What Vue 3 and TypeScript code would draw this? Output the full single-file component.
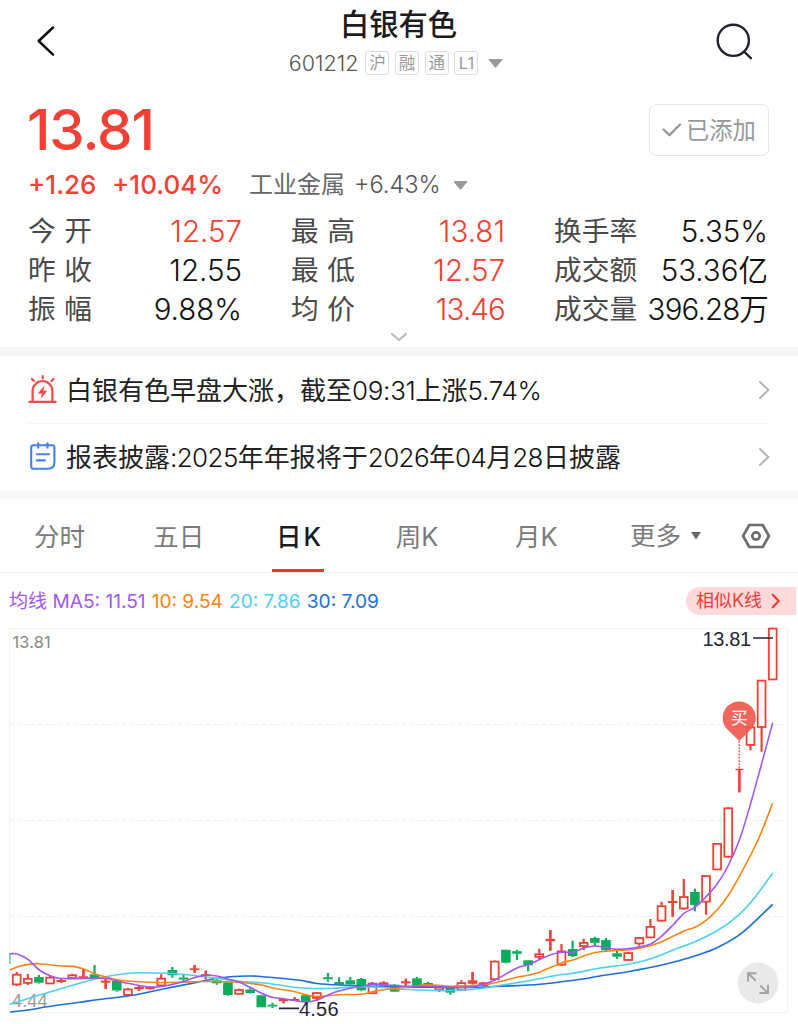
<script setup lang="ts">
interface Quote {
  label: string
  value: string
  tone: 'up' | 'plain'
  tight?: boolean
}

type Kind = 'h' | 'r' | 'g'
// body top, body bottom, high, low, kind (h: hollow, r: thin red, g: green)
type Candle = [number, number, number, number, Kind]

const badges: string[] = ['沪', '融', '通', 'L1']

const columns: Quote[][] = [
  [
    { label: '今 开', value: '12.57', tone: 'up' },
    { label: '昨 收', value: '12.55', tone: 'plain' },
    { label: '振 幅', value: '9.88%', tone: 'plain' },
  ],
  [
    { label: '最 高', value: '13.81', tone: 'up' },
    { label: '最 低', value: '12.57', tone: 'up' },
    { label: '均 价', value: '13.46', tone: 'up', tight: true },
  ],
  [
    { label: '换手率', value: '5.35%', tone: 'plain' },
    { label: '成交额', value: '53.36亿', tone: 'plain' },
    { label: '成交量', value: '396.28万', tone: 'plain', tight: true },
  ],
]

const tabs: string[] = ['分时', '五日', '日K', '周K', '月K']
const activeTab = '日K'

// Headlines split so that runs of digits can be set tighter than the Chinese text.
const splitDigits = (s: string): string[] => s.split(/([0-9:.%]+)/).filter(Boolean)
const isDigits = (s: string): boolean => /^[0-9:.%]/.test(s)
const headlineOne = splitDigits('白银有色早盘大涨，截至09:31上涨5.74%')
const headlineTwo = splitDigits('报表披露:2025年年报将于2026年04月28日披露')

const candles: Candle[] = [
  [974.3, 984, 972, 986, 'h'], [978.5, 982.5, 974, 985, 'h'], [977, 982.7, 975, 983.5, 'g'],
  [977.3, 983, 975, 983, 'h'], [980, 982, 978.5, 983, 'r'], [974.9, 977.6, 973.7, 978, 'h'],
  [976.3, 978, 969, 978, 'r'], [974.3, 978.3, 965, 978.3, 'g'], [980.6, 982.6, 979, 989, 'r'],
  [981, 990.5, 979.5, 991.7, 'g'], [989, 994.5, 988, 995, 'h'], [987, 989.2, 985.7, 991, 'r'],
  [987, 989.2, 986.5, 989.5, 'r'], [978.3, 985, 974.3, 986, 'h'], [970, 975.3, 967, 977.7, 'g'],
  [977.5, 979.5, 975, 981.7, 'g'], [968.3, 970.1, 965, 972.7, 'r'], [974.1, 976, 970.7, 979.3, 'r'],
  [980.3, 983.3, 979.3, 984.7, 'g'], [982.3, 995, 982, 995.7, 'g'], [989.6, 993.4, 988.5, 994.5, 'h'],
  [989.5, 993, 987.7, 993.4, 'g'], [995.3, 1007.3, 995, 1007.3, 'g'], [1004.7, 1006.5, 1002.7, 1008, 'g'],
  [999, 1001.2, 998, 1003.3, 'r'], [999, 1001, 997.3, 1001, 'r'], [995.2, 1001.3, 994, 1002, 'g'],
  [992.7, 997.5, 992, 1001, 'h'], [977.2, 979.2, 973, 981.7, 'g'], [982, 984.7, 977.3, 984.7, 'g'],
  [980.3, 984.3, 977, 984.7, 'g'], [979, 990.3, 978, 991.3, 'g'], [983.2, 992.8, 982, 993, 'h'],
  [982.3, 985.7, 981.5, 986.3, 'r'], [984.7, 991.7, 984, 992, 'g'], [981.3, 983.3, 978.7, 985.7, 'r'],
  [978.3, 987.3, 977, 988, 'g'], [983, 985.7, 981.7, 987, 'g'], [987.2, 989.6, 986, 992, 'h'],
  [987.3, 992.7, 986, 994.7, 'g'], [982.7, 989.6, 980.3, 990, 'h'], [980.3, 983.8, 972, 984.3, 'r'],
  [982.4, 986, 982, 986.5, 'r'], [961.2, 978.8, 960.5, 980, 'h'], [949.8, 962.7, 949.5, 963.5, 'g'],
  [951.2, 953.8, 949.7, 960, 'g'], [960.3, 965.3, 960, 971.3, 'g'], [953.8, 956.4, 948.7, 960, 'h'],
  [938.8, 941.2, 930, 950.7, 'r'], [951, 964.3, 944, 965.4, 'h'], [949, 956, 940.7, 957, 'g'],
  [942.5, 945.6, 938.7, 950, 'h'], [938, 942.9, 936.7, 946, 'g'], [940, 950.3, 938, 951, 'g'],
  [953.3, 956.7, 950.3, 958.7, 'g'], [952.7, 959.6, 952, 960, 'h'], [937.6, 943, 937, 945.7, 'h'],
  [926.5, 937, 919, 937.6, 'h'], [905.8, 920.2, 901.7, 921.7, 'h'], [901, 903, 890, 916.7, 'r'],
  [896.6, 908, 879, 909.7, 'h'], [892, 905, 888.7, 911.3, 'g'], [875.6, 901.2, 875, 914.7, 'h'],
  [843.5, 869, 843, 869.5, 'h'], [807.9, 856.3, 807.3, 857.8, 'h'], [768.8, 770.3, 769, 792.3, 'r'],
  [727, 744.5, 726.5, 750.3, 'h'], [680.2, 726.6, 680, 751.7, 'h'], [628.2, 679, 627.8, 679.5, 'h'],
]

const candleX = (i: number): number => 16.7 + i * 11.118

// Smooth curve through the points: Catmull-Rom tangents as cubic segments.
function curve(points: number[][]): string {
  let d = `M${points[0][0]} ${points[0][1]}`
  for (let i = 0; i < points.length - 1; i++) {
    const a = points[Math.max(i - 1, 0)]
    const b = points[i]
    const c = points[i + 1]
    const e = points[Math.min(i + 2, points.length - 1)]
    const k = (c[0] - b[0]) / 3
    const m1 = (c[1] - a[1]) / (c[0] - a[0])
    const m2 = (e[1] - b[1]) / (e[0] - b[0])
    d += `C${(b[0] + k).toFixed(1)} ${(b[1] + m1 * k).toFixed(1)} ${(c[0] - k).toFixed(1)} ${(c[1] - m2 * k).toFixed(1)} ${c[0]} ${c[1]}`
  }
  return d
}

const averages: { name: string; color: string; d: string }[] = [
  {
    name: 'ma30', color: '#1a6fdc',
    d: curve([[10, 1012], [30, 1009.7], [47, 1006.7], [80, 1002.3], [97, 999.7], [133, 995.3], [163, 989], [200, 981.7], [213, 979], [230, 976.7], [252, 976], [267, 977], [300, 980.3], [317, 983.5], [347, 985.3], [373, 986.3], [400, 987], [433, 987.2], [467, 987.5], [500, 986.3], [540, 984.3], [567, 981], [583, 979], [600, 976], [628, 971.7], [665, 964.3], [698, 955], [718, 947.3], [741, 933.7], [772.7, 904.3]]),
  },
  {
    name: 'ma20', color: '#4dd0f5',
    d: curve([[10, 1004.3], [33, 997], [60, 989], [83, 982.3], [103, 977.3], [123, 974], [137, 972.8], [167, 973.3], [187, 974.7], [200, 976.3], [220, 978.7], [240, 981.3], [267, 983.3], [290, 986.7], [313, 988.5], [333, 988.3], [353, 986.9], [380, 987.3], [400, 989], [433, 990.5], [460, 990.3], [483, 988.3], [507, 984.3], [533, 980], [557, 975.3], [573, 973.3], [600, 968], [628, 964.3], [651, 958.7], [675, 949.3], [695, 941.7], [718, 930.3], [738, 915.7], [755, 897.3], [772.7, 873]]),
  },
  {
    name: 'ma10', color: '#ff8310',
    d: curve([[10, 970], [17, 967], [28, 964.4], [39, 963.7], [61.7, 966], [73, 966.4], [83.5, 969], [95, 974], [107, 977.3], [118, 980], [150, 982.3], [180, 982.3], [200, 981.5], [228, 981.7], [240, 982.3], [262, 985], [272, 987.7], [295, 991.7], [306, 994.7], [317, 996.3], [340, 994.7], [363, 994], [377, 990.7], [400, 988], [410, 986.7], [428, 984.9], [450, 986.3], [467, 985.7], [483, 984.7], [495, 982.7], [517, 977.3], [528, 975.3], [540, 972], [562, 962.7], [573, 960], [583, 956.3], [595, 952.5], [618, 950.3], [631, 949.7], [650, 945.7], [661, 942], [684, 931], [695, 927.3], [706, 920.3], [717, 910], [728, 895.7], [741, 873.3], [758, 840], [772.7, 803.3]]),
  },
  {
    name: 'ma5', color: '#a257f0',
    d: curve([[10, 953.7], [17.3, 953.9], [28.3, 959.7], [39.3, 970], [50, 975.7], [61, 978.5], [97, 978.1], [107, 978.5], [117, 981], [128, 983.3], [150, 987], [163, 986.3], [182, 982], [195, 977.5], [206.7, 975.3], [217, 976], [228, 979], [239.5, 982.3], [250, 987.3], [261.6, 993.3], [272, 997.3], [283, 998.7], [306, 1002.1], [317, 1000], [328, 995], [338, 991.3], [348, 988.7], [363, 985.7], [372.7, 984.2], [383, 984.7], [400, 986], [428, 986.3], [467, 987.3], [483, 984.3], [495, 980], [517, 968], [528, 964.7], [550, 955], [562, 952.2], [573, 952.3], [583, 948.3], [595, 946], [604, 947.3], [615, 949.2], [631, 948.3], [650, 944.3], [661, 936.7], [673, 925], [684, 913.3], [695, 907.3], [706, 896.7], [717, 884.3], [728, 866], [739.7, 839.3], [749.7, 806.7], [761.3, 765], [772.7, 722.7]]),
  },
]
</script>

<template>
  <main class="page">
    <header class="top">
      <svg class="back" width="24" height="34" viewBox="0 0 24 34"><path d="M21 3.5 6.7 17 21 30.7" fill="none" stroke="#111" stroke-width="2.5" stroke-linecap="round" stroke-linejoin="round" /></svg>
      <div class="heading">
        <h1>白银有色</h1>
        <div class="code-row">
          <span class="code">601212</span>
          <span v-for="b in badges" :key="b" class="badge">{{ b }}</span>
          <svg class="caret" width="15" height="9" viewBox="0 0 15 9"><path d="M1 .6h13L7.5 8.4z" fill="#999" stroke="#999" stroke-linejoin="round" /></svg>
        </div>
      </div>
      <svg class="search" width="40" height="40" viewBox="0 0 40 40"><g fill="none" stroke="#20222e" stroke-width="2.4" stroke-linecap="round"><circle cx="18.3" cy="19.3" r="15.6" /><path d="m29.5 31 6.4 6.2" /></g></svg>
    </header>

    <section class="price-row">
      <div class="price">13.81</div>
      <button class="added">
        <svg width="20" height="16" viewBox="0 0 20 16"><path d="m1.5 8.5 6 5.7L18 3.5" fill="none" stroke="#999" stroke-width="2.4" stroke-linecap="round" stroke-linejoin="round" /></svg>
        <span>已添加</span>
      </button>
    </section>

    <section class="change-row">
      <span class="delta">+1.26</span>
      <span class="percent">+10.04%</span>
      <span class="sector">工业金属</span>
      <span class="sector-change">+6.43%</span>
      <svg width="15" height="9" viewBox="0 0 15 9"><path d="M1 .6h13L7.5 8.4z" fill="#999" stroke="#999" stroke-linejoin="round" /></svg>
    </section>

    <section class="quotes">
      <dl v-for="(col, c) in columns" :key="c">
        <div v-for="q in col" :key="q.label" class="quote">
          <dt>{{ q.label }}</dt>
          <dd :class="[q.tone, { tight: q.tight }]">{{ q.value }}</dd>
        </div>
      </dl>
    </section>
    <div class="expander">
      <svg width="18" height="10" viewBox="0 0 18 10"><path d="m2 2 7 6 7-6" fill="none" stroke="#bbb" stroke-width="2.2" stroke-linecap="round" /></svg>
    </div>

    <section class="news">
      <div class="item">
        <svg width="30" height="30" viewBox="0 0 30 30">
          <g fill="none" stroke="#f4494a" stroke-width="2.2" stroke-linecap="round">
            <path d="M1.3 26.8h26.4M4.6 26.5V16a9.9 10 0 0 1 19.8 0v10.5M14.7 1.1v2.2M4 3.9l1.9 2M25.4 3.9l-1.9 2" />
          </g>
          <path d="m16.3 10.5-6.5 8h4l-1.1 5.3 6.6-8h-4z" fill="#f4494a" />
        </svg>
        <p><span v-for="(s, i) in headlineOne" :key="i" :class="{ num: isDigits(s) }">{{ s }}</span></p>
        <svg class="arrow" width="12" height="20" viewBox="0 0 12 20"><path d="m2 2 8.3 8L2 18" fill="none" stroke="#b5b5b5" stroke-width="2" stroke-linecap="round" /></svg>
      </div>
      <div class="item">
        <svg width="30" height="30" viewBox="0 0 30 30">
          <g fill="none" stroke="#4480f5" stroke-width="2.1" stroke-linecap="round" stroke-linejoin="round">
            <path d="M5.5 3.2h18.6q2.3 0 2.3 2.3v14.8q0 6.5-6.5 6.5H5.5q-2.3 0-2.3-2.3v-19q0-2.3 2.3-2.3zM10.2 1.2v4.6M19.5 1.2v4.6M8.8 12.3h12.1M8.8 18.4h8" />
          </g>
        </svg>
        <p class="long"><span v-for="(s, i) in headlineTwo" :key="i" :class="{ num: isDigits(s) }">{{ s }}</span></p>
        <svg class="arrow" width="12" height="20" viewBox="0 0 12 20"><path d="m2 2 8.3 8L2 18" fill="none" stroke="#b5b5b5" stroke-width="2" stroke-linecap="round" /></svg>
      </div>
    </section>

    <nav class="tabs">
      <span v-for="t in tabs" :key="t" class="tab" :class="{ active: t === activeTab }">{{ t }}</span>
      <span class="more">更多<svg width="12" height="10" viewBox="0 0 12 10"><path d="M1 1h10L6 8.6z" fill="#666" /></svg></span>
      <svg class="settings" width="30" height="26" viewBox="0 0 30 26"><g fill="none" stroke="#6d6d6d" stroke-width="2.7" stroke-linejoin="round"><path d="M8.3 2h13.4l6.2 11-6.2 11H8.3L2.1 13z" /><circle cx="15" cy="13" r="3.7" /></g></svg>
    </nav>

    <section class="legend">
      <span class="c5">均线 MA5: 11.51</span>
      <span class="c10">10: 9.54</span>
      <span class="c20">20: 7.86</span>
      <span class="c30">30: 7.09</span>
      <span class="similar">相似K线<svg width="10" height="16" viewBox="0 0 10 16"><path d="m1.7 1.7 6 6.3-6 6.3" fill="none" stroke="#ee3d3a" stroke-width="2.2" stroke-linecap="round" /></svg></span>
    </section>

    <svg class="chart" width="798" height="403" viewBox="0 621 798 403">
      <rect x="9.5" y="628.5" width="778" height="384" fill="none" stroke="#f3f3f3" />
      <path d="M10 724.5H787M10 820.5H787M10 916.5H787" stroke="#f0f0f0" stroke-dasharray="4 3" />
      <path d="M10 953v11" stroke="#69c99b" stroke-width="1.5" />
      <text x="12" y="1006.5" class="axis low" textLength="35.5">4.44</text>
      <text x="12.5" y="647.7" class="axis high" textLength="38">13.81</text>
      <g v-for="(k, i) in candles" :key="i" :class="k[4]">
        <path :d="`M${candleX(i)} ${k[2]}V${k[0]}M${candleX(i)} ${k[1]}V${k[3]}`" class="wick" />
        <rect v-if="k[4] === 'h'" :x="candleX(i) - 3.9" :y="k[0] + 0.4" width="7.8" :height="Math.max(k[1] - k[0], 1.5)" class="body" />
        <template v-else>
          <path v-if="k[4] === 'r'" :d="`M${candleX(i)} ${k[2]}V${k[3]}`" class="wick" />
          <rect :x="candleX(i) - (i === 65 ? 3.8 : 4.8)" :y="k[0]" :width="i === 65 ? 7.6 : 9.6" :height="k[1] - k[0]" class="body" />
        </template>
      </g>
      <path v-for="m in averages" :key="m.name" :d="m.d" fill="none" :stroke="m.color" stroke-width="1.6" />
      <path d="M279 1008.4h20M753 638h20" stroke="#222638" stroke-width="1.6" />
      <text x="299" y="1016" class="mark" textLength="39.5">4.56</text>
      <text x="702.5" y="645.7" class="mark" textLength="48.5">13.81</text>
      <path d="M739.2 741v28" stroke="#ef4136" stroke-width="1.4" stroke-dasharray="1.6 1.6" />
      <path d="M739.2 741 727.2 729.2a16.5 16.5 0 1 1 24 0z" fill="#ee5a50" opacity=".93" />
      <text x="739.2" y="723.5" class="buy">买</text>
      <circle cx="758" cy="983" r="20.4" fill="#e9e9e9" />
      <path d="M748 981.5V973.2h8.6M748 973.2l7.8 7.5M768 984.7v8.3h-8.6M768 993l-7.8-7.5" fill="none" stroke="#a4a4a4" stroke-width="1.9" />
    </svg>
  </main>
</template>

<style>
body { margin: 0; background: #fff; }
</style>

<style scoped>
.page { width: 798px; height: 1024px; overflow: hidden; background: #fff; font-family: Inter, "Noto Sans CJK SC", sans-serif; color: #222; }
svg { display: block; flex: none; }
.top { display: flex; height: 92px; padding: 0 26px 0 32px; justify-content: space-between; align-items: flex-start; }
.back { margin-top: 24px; }
.heading { display: flex; flex-direction: column; align-items: center; margin-left: 21px; }
h1 { margin: 4px 0 0 5px; font-size: 29.3px; line-height: 42px; font-weight: 500; color: #1c1c1c; }
.code-row { display: flex; align-items: center; height: 24px; margin-top: 5px; }
.code { font-size: 21.5px; font-weight: 340; color: #555; margin-right: 7px; }
.badge { box-sizing: border-box; width: 24px; height: 24px; border: 1px solid #ddd; border-radius: 3px; margin-right: 5.7px; font-size: 16.5px; line-height: 23px; text-align: center; color: #999; }
.caret { margin-left: 4px; }
.search { margin-top: 21px; margin-right: 17px; }
.price-row { display: flex; justify-content: space-between; align-items: flex-start; height: 76px; padding: 0 29px 0 27px; }
.price { font-size: 56.5px; line-height: 76px; font-weight: 500; letter-spacing: -1.1px; color: #ef4136; }
.added { box-sizing: border-box; display: flex; align-items: center; width: 120px; height: 52px; margin-top: 12px; padding: 0 0 2px 12px; gap: 4px; border: 1px solid #e6e6e6; border-radius: 7px; background: #fff; font: 23.3px "Noto Sans CJK SC", sans-serif; color: #999; }
.change-row { display: flex; align-items: center; height: 34px; padding-left: 28px; line-height: 34px; color: #666; }
.delta, .percent { color: #ef4136; font-size: 26px; font-weight: 480; }
.delta { width: 84px; }
.percent { width: 137px; }
.sector { width: 105px; font-size: 24px; }
.sector-change { width: 99px; font-size: 23.6px; font-weight: 340; color: #555; }
.quotes { display: grid; grid-template-columns: 214px 214px 214px; column-gap: 49px; padding: 10px 0 0 28px; }
dl { margin: 0; }
.quote { display: flex; justify-content: space-between; height: 39px; line-height: 39px; white-space: nowrap; }
dt { font-size: 27.7px; line-height: 39px; word-spacing: .7px; color: #4a4a4a; }
dd { margin: 0; font-size: 29.5px; font-weight: 340; color: #111; }
.up { color: #f83c30; }
.tight { letter-spacing: -.85px; }
.expander { display: flex; justify-content: center; height: 18px; }
.expander svg { margin-top: 3px; }
.news { border-top: 9px solid #f6f6f9; border-bottom: 9px solid #f8f8f8; padding: 0 28px; }
.item { display: flex; align-items: center; height: 67px; }
.item + .item { height: 66px; border-top: 1px solid #f5f5f5; }
.item p { flex: 1; margin: 2px 0 0 8px; font-size: 26px; line-height: 40px; color: #222; white-space: nowrap; }
.num { letter-spacing: -.3px; font-weight: 340; color: #111; }
.long .num { letter-spacing: -.6px; }
.tabs { display: flex; height: 73px; border-bottom: 1px solid #eee; align-items: stretch; font-size: 25.5px; line-height: 76px; color: #7b7b7b; }
.tab { position: relative; width: 119.2px; text-align: center; }
.active { color: #1c1c1c; font-weight: 500; letter-spacing: 2px; text-indent: 3px; }
.active::after { content: ""; position: absolute; left: 34px; bottom: 0; width: 52px; height: 3px; background: #ee3533; }
.more { display: flex; align-items: center; width: 108px; padding-left: 34px; gap: 9px; margin-right: 3px; }
.settings { align-self: center; margin-top: 0; }
.legend { display: flex; align-items: center; height: 48px; padding: 0 2px 0 9px; font-size: 19.1px; line-height: 28px; white-space: nowrap; }
.legend > span { margin-right: 6.1px; margin-top: 8px; }
.c5 { color: #a257f0; }
.c10 { color: #ff8310; }
.c20 { color: #4dd0f5; }
.c30 { color: #1a6fdc; }
.legend > .similar { box-sizing: border-box; display: flex; align-items: center; gap: 9px; width: 110px; height: 28px; margin: 7px 0 0 auto; padding-left: 10px; border-radius: 14px 0 0 14px; background: #ffdada; color: #ee3d3a; font-size: 18px; }
.axis { font-family: "Liberation Sans", sans-serif; fill: #777; }
.high { font-family: Inter, sans-serif; font-size: 16.3px; font-weight: 400; fill: #888; }
.low { font-size: 18px; fill: #999; }
.mark { font: 20px "Liberation Sans", sans-serif; fill: #222638; }
.buy { font: 17px "Noto Sans CJK SC", sans-serif; fill: #fff; text-anchor: middle; }
.wick { fill: none; stroke-width: 2.2; }
.h .wick, .r .wick { stroke: #ef4136; }
.g .wick { stroke: #0bad5d; }
.h .body { fill: none; stroke: #ef4136; stroke-width: 1.8; }
.r .body { fill: #ef4136; }
.g .body { fill: #0bad5d; }
</style>
